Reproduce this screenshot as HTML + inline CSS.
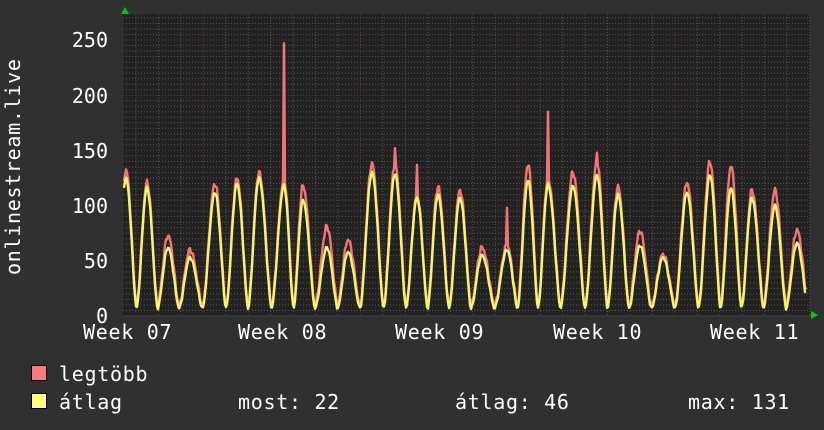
<!DOCTYPE html>
<html><head><meta charset="utf-8"><style>
html,body{margin:0;padding:0;background:#303030;}
svg{display:block}
text{font-family:"DejaVu Sans Mono","Liberation Mono",monospace;fill:#fff;font-size:20px}
</style></head><body>
<svg id="s" width="824" height="430" xmlns="http://www.w3.org/2000/svg">
<rect width="824" height="430" fill="#303030"/>
<rect x="123" y="14" width="687" height="302" fill="#222"/>
<g id="grid"></g>
<path id="mx" fill="none" stroke="#f47474" stroke-width="2.4" stroke-linejoin="round"/>
<path id="av" fill="none" stroke="#f6f66c" stroke-width="2.4" stroke-linejoin="round"/>
<line x1="123" y1="316" x2="812" y2="316" stroke="#444" stroke-width="1"/>
<polygon points="121,14 129,14 125,7" fill="#0c0"/>
<polygon points="811,311 811,319 818,315" fill="#0c0"/>
<g text-anchor="end">
<text x="108" y="47">250</text>
<text x="108" y="103">200</text>
<text x="108" y="158">150</text>
<text x="108" y="213">100</text>
<text x="108" y="268">50</text>
<text x="108" y="323">0</text>
</g>
<g font-size="21" letter-spacing="0.7">
<text x="83" y="339">Week 07</text>
<text x="238" y="339">Week 08</text>
<text x="395" y="339">Week 09</text>
<text x="553" y="339">Week 10</text>
<text x="710" y="339">Week 11</text>
<text transform="translate(20,275) rotate(-90)">onlinestream.live</text>
<text x="59" y="381">legtöbb</text>
<text x="59" y="409">átlag</text>
<text x="238" y="409">most: 22</text>
<text x="455" y="409">átlag: 46</text>
<text x="688" y="409">max: 131</text>
</g>
<rect x="31.5" y="365.5" width="15" height="15" fill="#ff7a7a" stroke="#000"/>
<rect x="31.5" y="393.5" width="15" height="15" fill="#ffff7a" stroke="#000"/>
</svg>
<script>
var g=document.getElementById('grid'),h='';
function Y(v){return 316-v*1.104;}
for(var v=5;v<=270;v+=5){var y=Y(v);if(y<14)break;var red=v%50==0;
h+='<line x1="123" x2="810" y1="'+y.toFixed(1)+'" y2="'+y.toFixed(1)+'" stroke="'+(red?'#6a3535':'#555')+'" stroke-width="1" stroke-dasharray="1,2"/>';}
for(var x=136;x<810;x+=22.45){var red=false;[203,360,518,675].forEach(function(m){if(Math.abs(x-m)<4)red=true;});
h+='<line y1="14" y2="316" x1="'+x.toFixed(1)+'" x2="'+x.toFixed(1)+'" stroke="'+(red?'#6a3535':'#555')+'" stroke-width="1" stroke-dasharray="1,2"/>';}
g.innerHTML=h;
var P=[[126,132,125],[147,121,116],[168,73,62],[190,60,53],[215,120,112],[237,125,120],[259,130,125],[284,124,118],[303,118,105],[327,81,62],[348,69,58],[372,138,130],[395,137,129],[417,110,107],[438,117,110],[460,114,107],[482,62,55],[507,64,60],[528,137,123],[548,125,119],[573,130,118],[597,140,128],[618,117,110],[640,77,64],[663,56,53],[687,121,112],[710,140,128],[731,136,116],[752,114,107],[775,114,100],[797,78,66]];
var spikes=[[284,247],[395,152],[507,98],[548,185],[597,148],[417,137]];
function val(x,k,tr){
 var i=0;while(i<P.length-1&&P[i+1][0]<x)i++;
 var a=P[i],b=P[i+1];
 if(x<=P[0][0]){b=P[0];a=[P[0][0]-22,P[0][k],P[0][k]];}
 if(!b||x>b[0]){a=P[P.length-1];b=[a[0]+22.4,40,30];}
 var t=(x-a[0])/(b[0]-a[0]);var pa=a[k],pb=b[k];
 var m=0.5;
 if(t<m){var u=t/m;var s=Math.pow((1+Math.cos(Math.PI*u))/2,0.8);return tr+(pa-tr)*s;}
 else{var u=(t-m)/(1-m);var s=Math.pow((1-Math.cos(Math.PI*u))/2,0.9);return tr+(pb-tr)*s;}
}
function build(k,tr,noise){
 var d='';
 for(var x=124;x<=806;x++){
  var v=val(x,k,tr)+noise*Math.sin(x*1.7)*Math.sin(x*0.37);
  if(k==1)spikes.forEach(function(s){if(Math.abs(x-s[0])<1)v=s[1];});
  if(x==806)v=k==1?24:22;
  d+=(x==124?'M':'L')+x+','+Y(Math.max(v,3)).toFixed(1);
 }
 return d;
}
document.getElementById('mx').setAttribute('d',build(1,10,3));
document.getElementById('av').setAttribute('d',build(2,7,1.5));
</script>
</body></html>
